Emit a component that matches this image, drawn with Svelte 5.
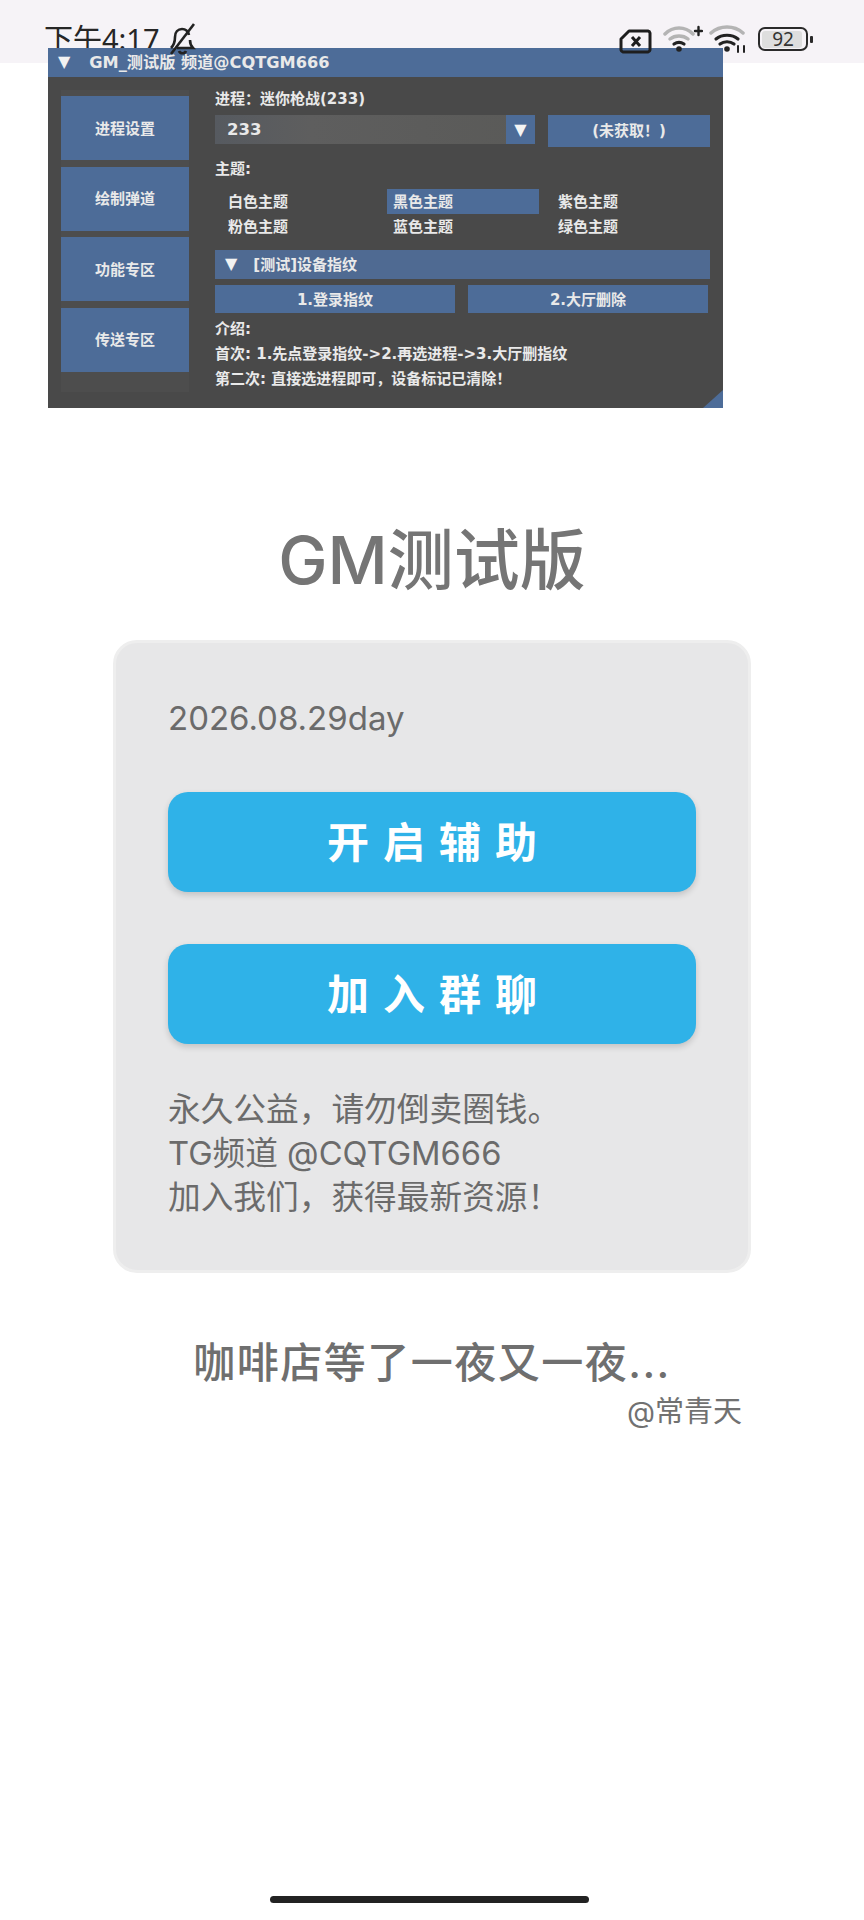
<script lang="ts">
  const sideItems = ['进程设置', '绘制弹道', '功能专区', '传送专区'];
  const themes = ['白色主题', '黑色主题', '紫色主题', '粉色主题', '蓝色主题', '绿色主题'];
  const selectedTheme = '黑色主题';
  const notes = ['永久公益，请勿倒卖圈钱。', 'TG频道 @CQTGM666', '加入我们，获得最新资源！'];
</script>

<div class="page">
  <header class="status">
    <div class="clock">
      <span>下午4:17</span>
      <svg class="bell" viewBox="0 0 28 32" width="28" height="32" fill="none" stroke="#222" stroke-width="2.6">
        <path d="M3 25c3-3 4-6 4-11 0-5 3-8 7-8s6 2 7 6M22 17c0 3 1 6 3 8H9" />
        <path d="M26 1 3 31" />
        <path d="M11 28c1 3 6 3 7 0" />
      </svg>
    </div>
    <div class="status-icons">
      <svg class="sim" viewBox="0 0 33 25" width="33" height="25" fill="none" stroke="#1e1e1e" stroke-width="3">
        <path d="M10 2h19a2.500 2.500 0 0 1 2 2v17a2.500 2.500 0 0 1-2 2H4a2.500 2.500 0 0 1-2-2V10z" stroke-linejoin="round" />
        <path d="m13 8 8 9M21 8l-8 9" />
      </svg>
      <svg class="wifi-a" viewBox="0 0 40 28" width="40" height="28" fill="none" stroke-linecap="round">
        <path d="M2 9c8-8 20-8 28 0" stroke="#b4b4b4" stroke-width="3.500" />
        <path d="M7 14c5-4 13-4 18 0" stroke="#b4b4b4" stroke-width="3.500" />
        <path d="M11 19c3-2 7-2 10 0" stroke="#222" stroke-width="3.200" />
        <circle cx="16" cy="24" r="2.800" fill="#222" />
        <path d="M32 6h7M35.500 2v8" stroke="#222" stroke-width="2.400" />
      </svg>
      <svg class="wifi-b" viewBox="0 0 38 28" width="38" height="28" fill="none" stroke-linecap="round">
        <path d="M2 8c9-8 23-8 32 0" stroke="#b4b4b4" stroke-width="3.500" />
        <path d="M7 14c6-5 16-5 22 0" stroke="#222" stroke-width="3.200" />
        <path d="M11 19c4-3 10-3 14 0" stroke="#222" stroke-width="3.200" />
        <circle cx="18" cy="24" r="2.800" fill="#222" />
        <path d="M29 21v6M35 21v6" stroke="#222" stroke-width="2" />
      </svg>
      <div class="battery">
        <div class="battery-body">
          <div class="battery-fill"></div>
          <span>92</span>
        </div>
        <div class="battery-cap"></div>
      </div>
    </div>
  </header>

  <section class="panel">
    <div class="panel-title">
      <span class="tri">▼</span>
      <span>GM_测试版 频道@CQTGM666</span>
    </div>
    <div class="panel-body">
      <nav class="side">
        {#each sideItems as item}
          <div class="side-item">{item}</div>
        {/each}
      </nav>
      <div class="panel-main">
        <div class="line">进程：迷你枪战(233)</div>
        <div class="combo-row">
          <div class="combo">
            <span>233</span>
            <span class="combo-arrow">▼</span>
          </div>
          <div class="fetch">(未获取！)</div>
        </div>
        <div class="line theme-label">主题:</div>
        <div class="themes">
          {#each themes as theme}
            <div class="theme" class:selected={theme === selectedTheme}>{theme}</div>
          {/each}
        </div>
        <div class="section-head">
          <span class="tri">▼</span>
          <span>[测试]设备指纹</span>
        </div>
        <div class="actions">
          <div class="action">1.登录指纹</div>
          <div class="action">2.大厅删除</div>
        </div>
        <div class="line intro">介绍:</div>
        <div class="line step">首次: 1.先点登录指纹->2.再选进程->3.大厅删指纹</div>
        <div class="line step">第二次: 直接选进程即可，设备标记已清除！</div>
      </div>
    </div>
    <div class="grip"></div>
  </section>

  <main class="content">
    <h1>GM测试版</h1>
    <div class="card">
      <p class="date">2026.08.29day</p>
      <button type="button" class="primary">开启辅助</button>
      <button type="button" class="primary second">加入群聊</button>
      <div class="notes">
        {#each notes as note}
          <p>{note}</p>
        {/each}
      </div>
    </div>
    <p class="quote">咖啡店等了一夜又一夜...</p>
    <p class="sign">@常青天</p>
  </main>

  <div class="home-bar"></div>
</div>

<style>
  :global(body) {
    margin: 0;
    background: #fff;
  }

  p,
  h1 {
    margin: 0;
  }

  .page {
    position: relative;
    display: flex;
    flex-direction: column;
    width: 864px;
    height: 1920px;
    overflow: hidden;
    background: #fff;
    font-family: Inter, "Noto Sans CJK SC", sans-serif;
  }

  /* the clock text goes under the pasted panel, the icons stay on top of it */
  .status {
    display: flex;
    justify-content: space-between;
    height: 63px;
    padding: 0 51px 0 44px;
    background: #f6f3f7;
    color: #262626;
  }

  .clock {
    display: flex;
    align-items: flex-start;
    gap: 8px;
    padding-top: 27px;
    font-family: "Noto Sans", "Noto Sans CJK SC", sans-serif;
    font-size: 29px;
    line-height: 23px;
  }

  .bell {
    position: relative;
    z-index: 2;
    margin-top: -4px;
  }

  .status-icons {
    position: relative;
    z-index: 2;
    display: flex;
    align-items: flex-start;
    padding-top: 25px;
  }

  .sim {
    margin-top: 4px;
  }

  .wifi-a {
    margin-left: 11px;
  }

  .wifi-b {
    margin-left: 6px;
  }

  .battery {
    display: flex;
    align-items: center;
    margin-left: 11px;
    margin-top: 2px;
  }

  .battery-body {
    position: relative;
    display: flex;
    align-items: center;
    justify-content: center;
    box-sizing: border-box;
    width: 50px;
    height: 24px;
    border: 2.5px solid #2a2a2a;
    border-radius: 7px;
    font-family: "Noto Sans", sans-serif;
    font-size: 19px;
    color: #333;
  }

  .battery-fill {
    position: absolute;
    inset: 1.5px 4px 1.5px 1.5px;
    border-radius: 3px;
    background: #dedede;
  }

  .battery-body span {
    position: relative;
    line-height: 1;
  }

  .battery-cap {
    width: 3px;
    height: 7px;
    margin-left: 2px;
    border-radius: 1px;
    background: #2a2a2a;
  }

  /* pasted screenshot sitting over the status bar */
  .panel {
    position: absolute;
    z-index: 1;
    top: 48px;
    left: 48px;
    width: 675px;
    height: 360px;
    overflow: hidden;
    background: #494949;
    color: #e9e9e9;
    font-family: "DejaVu Sans", "Noto Sans CJK SC", sans-serif;
    font-size: 15px;
    font-weight: 700;
  }

  .panel-title {
    display: flex;
    align-items: center;
    gap: 19px;
    box-sizing: border-box;
    height: 29px;
    padding: 0 0 3px 10px;
    background: #4d6c98;
    font-size: 16.2px;
  }

  .tri {
    font-size: 16px;
    color: #f2f2f2;
  }

  .panel-body {
    display: flex;
    gap: 26px;
    padding: 13px 13px 0;
  }

  .side {
    display: flex;
    flex-direction: column;
    gap: 6.5px;
    box-sizing: border-box;
    width: 128px;
    height: 302px;
    padding-top: 6px;
    background: #4d4d4d;
  }

  .side-item {
    display: flex;
    align-items: center;
    justify-content: center;
    box-sizing: border-box;
    height: 64px;
    padding-bottom: 2px;
    background: #4d6c98;
  }

  .panel-main {
    flex: 1;
    min-width: 0;
  }

  .line {
    height: 20px;
    line-height: 18px;
    white-space: nowrap;
  }

  .combo-row {
    display: flex;
    align-items: flex-start;
    margin-top: 5px;
  }

  .combo {
    display: flex;
    align-items: center;
    justify-content: space-between;
    width: 320px;
    height: 29px;
    padding-left: 12px;
    box-sizing: border-box;
    background: linear-gradient(90deg, #565a60, #5e5e5e 30%, #5a5a58);
    font-size: 16.5px;
  }

  .combo-arrow {
    display: flex;
    align-items: center;
    justify-content: center;
    width: 29px;
    height: 29px;
    background: #4d6c98;
    font-size: 16px;
    color: #f4f4f4;
  }

  .fetch {
    display: flex;
    align-items: center;
    justify-content: center;
    box-sizing: border-box;
    width: 162px;
    height: 32px;
    margin-left: 13px;
    padding-bottom: 3px;
    background: #4d6c98;
  }

  .theme-label {
    margin-top: 13px;
  }

  .themes {
    display: grid;
    grid-template-columns: 172px 171px 1fr;
    grid-auto-rows: 25px;
    margin-top: 9px;
  }

  .theme {
    display: flex;
    align-items: center;
    box-sizing: border-box;
    padding: 0 0 3px 13px;
  }

  .theme:nth-child(3n + 2) {
    padding-left: 6px;
    margin-right: 19px;
  }

  .theme:nth-child(3n) {
    margin-left: -13px;
  }

  .theme.selected {
    background: #4d6c98;
  }

  .section-head {
    display: flex;
    align-items: center;
    gap: 16px;
    box-sizing: border-box;
    height: 29px;
    margin-top: 11px;
    padding: 0 0 3px 10px;
    background: #4f6a92;
  }

  .actions {
    display: flex;
    gap: 13px;
    margin-top: 6px;
    padding-right: 2px;
  }

  .action {
    display: flex;
    flex: 1;
    align-items: center;
    justify-content: center;
    box-sizing: border-box;
    height: 28px;
    padding-bottom: 2px;
    background: #4d6c98;
  }

  .intro {
    margin-top: 7px;
  }

  .step {
    margin-top: 5px;
  }

  .grip {
    position: absolute;
    right: 0;
    bottom: 0;
    width: 20px;
    height: 18px;
    background: #4d6c98;
    clip-path: polygon(100% 0, 100% 100%, 0 100%);
  }

  .content {
    display: flex;
    flex-direction: column;
    align-items: center;
  }

  h1 {
    margin-top: 455px;
    font-size: 66px;
    font-weight: 500;
    line-height: 84px;
    color: #757575;
  }

  .card {
    box-sizing: border-box;
    width: 638px;
    height: 633px;
    margin-top: 38px;
    padding: 53px 52px 0;
    border: 3px solid #eeeeee;
    border-radius: 24px;
    background: #e7e7e8;
    color: #6b6b6b;
  }

  .date {
    font-size: 33px;
    line-height: 44px;
  }

  .primary {
    display: block;
    box-sizing: border-box;
    width: 100%;
    height: 100px;
    margin-top: 52px;
    padding: 0 0 5px;
    border: 0;
    border-radius: 20px;
    background: #2fb2e8;
    box-shadow: 0 3px 6px rgba(0, 0, 0, 0.16);
    color: #fff;
    font-family: inherit;
    font-size: 42px;
    font-weight: 700;
    letter-spacing: 14px;
    text-indent: 14px;
  }

  .second {
    margin-top: 52px;
  }

  .notes {
    margin-top: 43px;
    font-size: 32.7px;
    line-height: 44px;
  }

  .quote {
    margin-top: 60px;
    font-size: 42px;
    font-weight: 500;
    line-height: 60px;
    letter-spacing: 1.5px;
    color: #6f6f6f;
  }

  .sign {
    align-self: flex-end;
    margin: 0 122px 0 0;
    font-size: 29px;
    line-height: 38px;
    color: #717171;
  }

  .home-bar {
    position: absolute;
    left: 270px;
    bottom: 17px;
    width: 319px;
    height: 7px;
    border-radius: 4px;
    background: #222;
  }
</style>
